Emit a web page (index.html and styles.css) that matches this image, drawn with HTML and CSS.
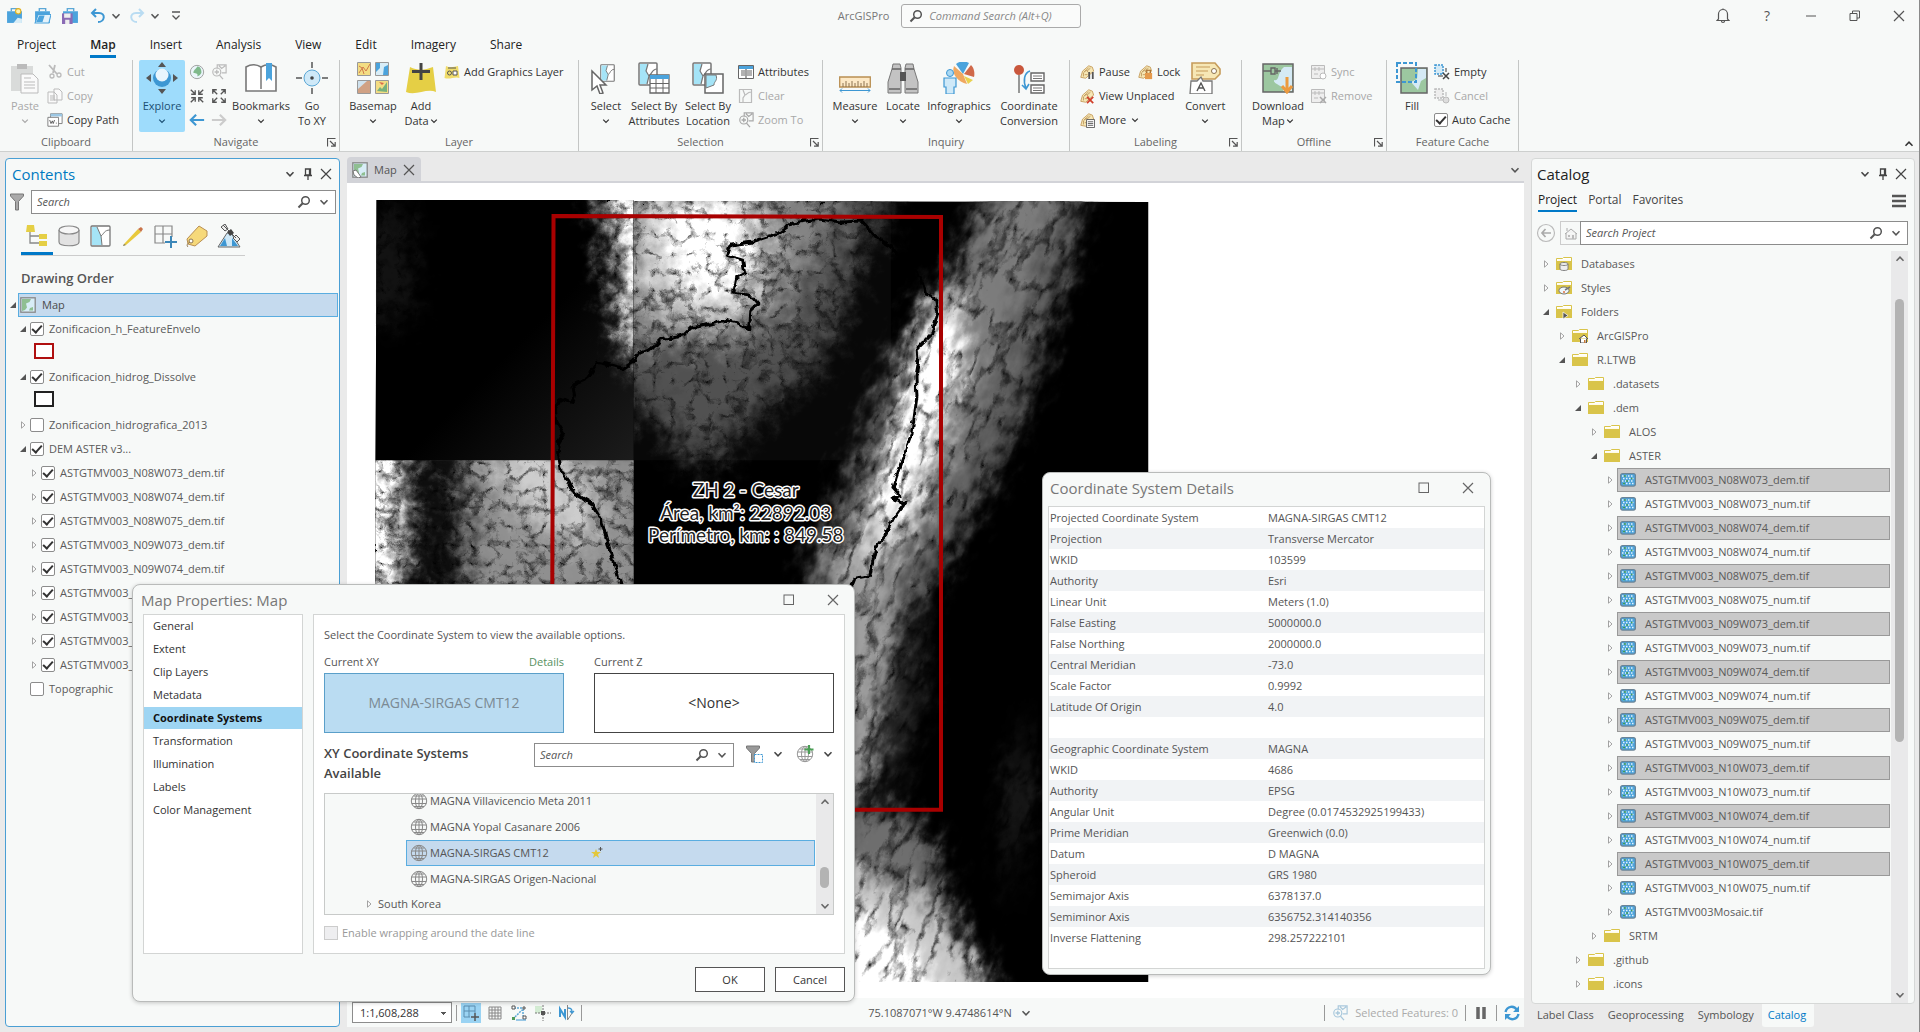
FILE: index.html
```html
<!DOCTYPE html>
<html lang="en">
<head>
<meta charset="utf-8">
<title>ArcGISPro</title>
<link rel="stylesheet" href="styles.css">
</head>
<body>
<svg class="sprite" aria-hidden="true">
  <symbol id="chev" viewBox="0 0 10 10"><path d="M1.5 3.2 5 6.8l3.500-3.600" fill="none" stroke="currentColor" stroke-width="1.500"/></symbol>
  <symbol id="chev-up" viewBox="0 0 10 10"><path d="M1.500 6.800 5 3.200l3.500 3.600" fill="none" stroke="currentColor" stroke-width="1.500"/></symbol>
  <symbol id="close" viewBox="0 0 12 12"><path d="M1 1l10 10M11 1 1 11" fill="none" stroke="currentColor" stroke-width="1.200"/></symbol>
  <symbol id="max" viewBox="0 0 12 12"><rect x="1" y="1" width="9.500" height="9.500" fill="none" stroke="currentColor"/></symbol>
  <symbol id="pin" viewBox="0 0 12 12"><path d="M3.500 1h5v6h-5zM7.500 1v6M2 7.500h8M6 7.500V12" fill="none" stroke="currentColor" stroke-width="1.300"/></symbol>
  <symbol id="mag" viewBox="0 0 14 14"><circle cx="8.500" cy="5.500" r="3.800" fill="none" stroke="#555" stroke-width="1.500"/><path d="M5.700 8.300 1.500 12.500" stroke="#555" stroke-width="2"/></symbol>
  <symbol id="open" viewBox="0 0 8 8"><path d="M7 1v6H1z" fill="#555"/></symbol>
  <symbol id="shut" viewBox="0 0 8 8"><path d="M2.500.8v6.400L6 4z" fill="#fff" stroke="#999" stroke-width=".9"/></symbol>
  <symbol id="launch" viewBox="0 0 9 9"><path d="M8.500.500h-8v8M3 3l5 5M8.200 4v4.200H4" fill="none" stroke="#555" stroke-width="1.200"/></symbol>
  <symbol id="folder" viewBox="0 0 16 14"><path d="M.500 1.500h6l1-1h8v12H.500z" fill="#fff" stroke="#d9c44a"/><path d="M0 4h16v9H0z" fill="#d9c44a"/><path d="M1.500 2.500h13V4h-13z" fill="#fffbe8"/></symbol>
  <symbol id="raster" viewBox="0 0 16 14"><rect x=".600" y=".600" width="14.800" height="12.500" rx="2" fill="#4ba3dc" stroke="#6b8496" stroke-width="1.200"/><path d="M2 3h12M3 5.500h11M2 8h12M3 10.500h11" stroke="#e3f3fc" stroke-width="1.300" stroke-dasharray="1.500 1.500"/><path d="M4 3h2M6 8h2M3 10.500h2M11 5.500h1.500" stroke="#3f9a55" stroke-width="1.500"/></symbol>
  <symbol id="globe" viewBox="0 0 18 18"><g fill="none" stroke="currentColor"><circle cx="9" cy="9" r="7.700"/><ellipse cx="9" cy="9" rx="3.500" ry="7.700"/><path d="M9 1.300v15.400M1.500 7h15M1.800 11.500h14.400M3.500 4h11M4 14.500h10"/></g></symbol>
  <symbol id="mapicon" viewBox="0 0 16 16"><rect x=".8" y=".8" width="14.400" height="14.400" fill="#d8edf7" stroke="#888" stroke-width="1.300"/><path d="M2 2h9L9.500 5 6 6.500l1 4L5 13l-3 1zM10 11l3-1v3.500H9z" fill="#8fbf92"/></symbol>
  <symbol id="case" viewBox="0 0 16 16"><path d="M5 4V1.500h6V4" fill="none" stroke="#5ca8d6" stroke-width="1.300"/><path d="M1 4h14v11H1z" fill="#4ba3dc"/></symbol>
  <symbol id="tag" viewBox="0 0 18 18"><path d="M2 15 4 8l7-6 4 1.500 1.500 4.500-9 8z" fill="#f6e7b5" stroke="#c69c5a"/><path d="M5 14V10l3-3 3 3v4M6 9l5-5M9 8l4-3.500M6.500 12h3" fill="none" stroke="#b98f52" stroke-width=".9"/></symbol>
  <symbol id="cards" viewBox="0 0 32 32"><rect x="1" y="1" width="18" height="22" rx="1" fill="#fff" stroke="#777" stroke-width="1.500"/><path d="M2 2h8l-2 7 3 5-2 8H2z" fill="#a5e4f7"/><path d="M10 2 8 9l3 5-2 8M19 7c-5 0-5 5-8 7" fill="none" stroke="#777" stroke-width="1.200"/></symbol>
  <symbol id="zoomsel" viewBox="0 0 18 18"><path d="M7 5V1h10v9h-5M9 2l3 3 4-3" fill="none" stroke="currentColor" stroke-width="1.300"/><circle cx="6.500" cy="9" r="4.500" fill="none" stroke="currentColor" stroke-width="1.300"/><path d="M4 9h5M6.500 6.500v5M9.500 12.500l4 4.500" stroke="currentColor" stroke-width="1.500"/></symbol>
  <symbol id="funnel" viewBox="0 0 14 18"><path d="M.500 1h13v2L8.500 8.500V17h-3V8.500L.500 3z" fill="#aaa" stroke="#777"/></symbol>
</svg>

<header class="top">
  <div class="titlebar">
    <nav class="quick" aria-label="Quick access">
      <button class="ic" aria-label="New"><svg width="17" height="17" viewBox="0 0 16 16"><use href="#case"/><path d="m7 15 4-5 4 1v4z" fill="#d8edf7"/><circle cx="11.500" cy="4" r="2.500" fill="#fff3b0" stroke="#e0b020"/></svg></button>
      <button class="ic" aria-label="Open"><svg width="17" height="17" viewBox="0 0 16 16"><use href="#case"/><path d="M4 7h12l-2 8H1z" fill="#e4f2fa" stroke="#4ba3dc"/><path d="M2 14 5 8h5l-2 6z" fill="#4ba3dc"/></svg></button>
      <button class="ic" aria-label="Save"><svg width="17" height="17" viewBox="0 0 16 16"><use href="#case"/><path d="M0 6h10v10H0z" fill="#8a6bb5"/><path d="M2 6h6v4H2zM3 12h4v4H3z" fill="#eee"/></svg></button>
      <button class="ic" aria-label="Undo"><svg width="16" height="16" viewBox="0 0 16 16"><path d="M6 1 2 5l4 4M2 5h7c7 0 6 9-1 9" fill="none" stroke="#3d97d3" stroke-width="2"/></svg></button>
      <svg class="c10" ><use href="#chev"/></svg>
      <button class="ic" aria-label="Redo"><svg width="16" height="16" viewBox="0 0 16 16"><path d="m10 1 4 4-4 4M14 5H7c-7 0-6 9 1 9" fill="none" stroke="#b9dcf2" stroke-width="2"/></svg></button>
      <svg class="c10"><use href="#chev"/></svg>
      <svg class="more-qa" viewBox="0 0 10 12"><path d="M1 2h8M1.500 5.500 5 9l3.500-3.500" fill="none" stroke="#555" stroke-width="1.300"/></svg>
    </nav>
    <div class="project"><span>ArcGISPro</span>
      <label class="cmd"><svg width="14" height="14"><use href="#mag"/></svg><input type="text" aria-label="Command search" placeholder="Command Search (Alt+Q)"></label>
    </div>
    <div class="winctl">
      <button aria-label="Notifications"><svg width="14" height="16" viewBox="0 0 14 16"><path d="M1 12.500h12L11.500 11V6a4.500 4.500 0 0 0-9 0v5zM5.500 13c0 2 3 2 3 0M7 .500v1.500" fill="none" stroke="#555" stroke-width="1.200"/></svg></button>
      <button class="help" aria-label="Help">?</button>
      <button aria-label="Minimize"><svg width="12" height="12" viewBox="0 0 12 12"><path d="M1 6h10" stroke="#555"/></svg></button>
      <button aria-label="Restore"><svg width="12" height="12" viewBox="0 0 12 12"><path d="M1 3.500h7v7H1zM3.500 3.500V1h7v7H8" fill="none" stroke="#555"/></svg></button>
      <button aria-label="Close"><svg width="12" height="12"><use href="#close"/></svg></button>
    </div>
  </div>
  <nav class="tabs" aria-label="Ribbon">
    <a href="#project">Project</a><a href="#map" class="on">Map</a><a href="#insert">Insert</a><a href="#analysis">Analysis</a><a href="#view">View</a><a href="#edit">Edit</a><a href="#imagery">Imagery</a><a href="#share">Share</a>
  </nav>
  <div class="ribbon">
    <section class="grp g1"><div class="tools">
      <button class="big w40 off"><svg viewBox="0 0 32 32"><path d="M2 4h22v25H2z" fill="#d9dbda"/><path d="M8 2h10v5H8z" fill="#bbb"/><path d="M12 12h12l5 5v14H12z" fill="#fafafa" stroke="#bbb"/><path d="M15 16h7M15 20h11M15 23h11M15 26h11" stroke="#bbb"/></svg><span>Paste</span><svg class="c10"><use href="#chev"/></svg></button>
      <div class="stack">
        <button class="sm off"><svg viewBox="0 0 16 16"><path d="m2 1 8 9M8 1 6 9" stroke="#bbb" stroke-width="1.800"/><circle cx="5" cy="12" r="2" fill="none" stroke="#bbb" stroke-width="1.300"/><circle cx="12" cy="11" r="2" fill="none" stroke="#bbb" stroke-width="1.300"/></svg>Cut</button>
        <button class="sm off"><svg viewBox="0 0 16 16"><path d="M7 1h5l3 3v8H7zM1 4h6l3 3v8H1zM3 8h5M3 10h5M3 12h5" fill="#fafafa" stroke="#bbb"/></svg>Copy</button>
        <button class="sm"><svg viewBox="0 0 18 16"><path d="M4 1h13v11H4z" fill="#fff" stroke="#777"/><path d="M4 1h13v3H4z" fill="#9bc7e4"/><path d="M1 5h12v10H1z" fill="#fff" stroke="#777"/><path d="m3 8 1.500 4L6 9l1 3 1.500-4M10.500 11v1" fill="none" stroke="#555"/></svg>Copy Path</button>
      </div></div><h3>Clipboard</h3></section>
    <section class="grp g2"><div class="tools">
      <button class="big w46 active"><svg viewBox="0 0 32 32"><circle cx="16" cy="16" r="9" fill="#3d97d3"/><circle cx="16" cy="13" r="6.500" fill="#e8f5fd"/><path d="m16 0 4 5h-8zM16 32l4-5h-8zM0 16l5-4v8zM32 16l-5-4v8z" fill="#555"/></svg><span>Explore</span><svg class="c10"><use href="#chev"/></svg></button>
      <div class="navgrid">
        <svg viewBox="0 0 18 18"><circle cx="9" cy="9" r="7.500" fill="#eaf5fa" stroke="#999"/><path d="M9 3c3-1 5 3 5 6s-4 5-5 5c2-3-1-4-4-4 0-4 3-4 4-7z" fill="#7fb98b"/></svg>
        <svg viewBox="0 0 18 18" class="dim"><use href="#zoomsel"/></svg>
        <svg viewBox="0 0 18 18"><path d="m2 2 4 4M7 2.500V7H2.500M16 2l-4 4M11 2.500V7h4.500M2 16l4-4M2.500 11H7v4.500M16 16l-4-4M15.500 11H11v4.500" fill="none" stroke="#555" stroke-width="1.500"/></svg>
        <svg viewBox="0 0 18 18"><path d="m7 7-5-5M2 6.500V2h4.500M11 7l5-5M11.500 2H16v4.500M7 11l-5 5M2 11.500V16h4.500M11 11l5 5M16 11.500V16h-4.500" fill="none" stroke="#555" stroke-width="1.500"/></svg>
        <svg viewBox="0 0 18 18"><path d="M17 9H2M8 3 2 9l6 6" fill="none" stroke="#3d97d3" stroke-width="2.400"/></svg>
        <svg viewBox="0 0 18 18"><path d="M1 9h15M10 3l6 6-6 6" fill="none" stroke="#ccc" stroke-width="2.400"/></svg>
      </div>
      <button class="big w64"><svg viewBox="0 0 32 32"><path d="M1 5c5-3 10-3 15 0 5-3 10-3 15 0v24H1z" fill="#fff" stroke="#777" stroke-width="1.600"/><path d="M16 5v22" stroke="#777" stroke-width="1.500"/><path d="M21 1h6v18l-3-3-3 3z" fill="#4ba3dc"/></svg><span>Bookmarks</span><svg class="c10"><use href="#chev"/></svg></button>
      <button class="big w40"><svg viewBox="0 0 32 32"><circle cx="16" cy="16" r="8" fill="#cfe9f8" stroke="#5ca8d6"/><circle cx="16" cy="16" r="1.800" fill="#444"/><path d="M16 0v6M16 26v6M0 16h6M26 16h6" stroke="#555" stroke-width="1.500"/></svg><span>Go<br>To XY</span></button>
    </div><h3>Navigate</h3><svg class="launch"><use href="#launch"/></svg></section>
    <section class="grp g3"><div class="tools">
      <button class="big w54"><svg viewBox="0 0 32 32"><path d="M.500.500h13v13H.500z" fill="#f3dd83" stroke="#999"/><path d="m2 11 4-6 3 4 4-7M2 4l3 2 2 6" fill="none" stroke="#d07a4a"/><path d="M18.500.500h13v13h-13z" fill="#d8edf7" stroke="#999"/><path d="M19 1h4v5l-4 4zM27 5l4-2v10h-5z" fill="#4ba3dc"/><path d="M.500 18.500h13v13H.500z" fill="#cfe2ee" stroke="#999"/><path d="M1 31v-4l9-8h3v12z" fill="#d0a184"/><path d="M18.500 18.500h13v13h-13z" fill="#f3dd83" stroke="#999"/><path d="m20 29 3-4 2 2 5-7v10z" fill="#78b27d"/><path d="m22 20 3 3 2-2z" fill="#d9694a"/></svg><span>Basemap</span><svg class="c10"><use href="#chev"/></svg></button>
      <button class="big w42"><svg viewBox="0 0 32 32"><path d="M5 5c8 4 15 3 23 0l3 25c-9-4-20 4-30 0z" fill="#e5cf45"/><path d="M16 1v17M7 9.500h18" stroke="#444" stroke-width="3"/></svg><span>Add<br>Data<svg class="c8"><use href="#chev"/></svg></span></button>
      <div class="stack flush">
        <button class="sm"><svg viewBox="0 0 16 16"><path d="M2 2c4 2 8 1 12 0l1.500 12C11 12 6 16 .500 14z" fill="#f0dc6a"/><circle cx="5.500" cy="9" r="2" fill="none" stroke="#555"/><path d="M9 7h4v4H9zM4 4h8" fill="#fff" stroke="#555"/></svg>Add Graphics Layer</button>
      </div></div><h3>Layer</h3></section>
    <section class="grp g4"><div class="tools">
      <button class="big w42"><svg viewBox="0 0 32 32"><svg x="10" y="0" width="24" height="28"><use href="#cards"/></svg><path d="M2 9v19l5-4 3 8 3-1-3-8h6z" fill="#fff" stroke="#666" stroke-width="1.500"/></svg><span>Select</span><svg class="c10"><use href="#chev"/></svg></button>
      <button class="big w54"><svg viewBox="0 0 32 32"><use href="#cards"/><path d="M12 13h19v18H12z" fill="#fff" stroke="#666" stroke-width="1.300"/><path d="M12 13h19v4H12z" fill="#4ba3dc"/><path d="M12 21.500h19M12 26h19M18 17v14M25 17v14" stroke="#666"/></svg><span>Select By<br>Attributes</span></button>
      <button class="big w54"><svg viewBox="0 0 32 32"><use href="#cards"/><path d="M13 12h18v19H13z" fill="#fff" stroke="#666" stroke-width="1.500"/><path d="M14 13h10c2 6-2 6-2 10l-8 3z" fill="#a5e4f7" stroke="#777"/></svg><span>Select By<br>Location</span></button>
      <div class="stack">
        <button class="sm"><svg viewBox="0 0 16 16"><path d="M.500 1.500h15v13H.500z" fill="#fff" stroke="#666"/><path d="M1 2h14v3H1z" fill="#4ba3dc"/><path d="M3 7h4M3 9h4M3 11h4M9 7h5M9 9h5M9 11h5M8 5v9" stroke="#666" stroke-width="1.200"/></svg>Attributes</button>
        <button class="sm off"><svg viewBox="0 0 16 16"><path d="M1.500 1.500h12v13h-12zM5 2l2 5-2 3v4M13 4C9 4 9 7 7 7" fill="none" stroke="#bbb" stroke-width="1.200"/></svg>Clear</button>
        <button class="sm off"><svg viewBox="0 0 18 18"><use href="#zoomsel"/></svg>Zoom To</button>
      </div></div><h3>Selection</h3><svg class="launch"><use href="#launch"/></svg></section>
    <section class="grp g5"><div class="tools">
      <button class="big w54"><svg viewBox="0 0 32 32"><path d="M.700 15h30.600v10H.700z" fill="#fde9c6" stroke="#b98f52" stroke-width="1.300"/><path d="M4 25v-4M7 25v-6M10 25v-4M13 25v-6M16 25v-4M19 25v-6M22 25v-4M25 25v-6M28 25v-4" stroke="#8c7350"/><path d="M1 28.500h30M3 26.500l-2 2 2 2M29 26.500l2 2-2 2" fill="none" stroke="#3d97d3"/></svg><span>Measure</span><svg class="c10"><use href="#chev"/></svg></button>
      <button class="big w42"><svg viewBox="0 0 32 32"><path d="M6 2h7l1 4v25H1V20L5 7zM19 2h7l1 5 4 13v11H18V6z" fill="#c3c3c3" stroke="#777"/><path d="M5 7h9M18 7h9M2 27h11M19 27h11" stroke="#666" stroke-width="1.500"/><path d="M13 10h6v9h-6z" fill="#555"/></svg><span>Locate</span><svg class="c10"><use href="#chev"/></svg></button>
      <button class="big w70"><svg viewBox="0 0 32 32"><path d="M20 12 13 2a12 12 0 0 1 13-1z" fill="#4ba3dc"/><path d="m21 12 7-9c3 3 4 8 3 12z" fill="#d0694a"/><path d="M20 12 11 4c-3 8 4 16 13 18z" fill="#f0a860"/><path d="m21 14 9 4-5 4z" fill="#e9d14e"/><circle cx="7" cy="11" r="3.500" fill="#a9d8f3" stroke="#3d97d3"/><path d="M1 16h12v9h-2v7H3v-7H1z" fill="#cfe9f8" stroke="#3d97d3" stroke-width="1.200"/></svg><span>Infographics</span><svg class="c10"><use href="#chev"/></svg></button>
      <button class="big w70"><svg viewBox="0 0 32 32"><circle cx="6" cy="8" r="5" fill="#c9573c"/><path d="M6 13v18" stroke="#777" stroke-width="1.500"/><path d="M17 9c-6 2-7 10-4 17M9 23l4 4 3-5" fill="none" stroke="#3d97d3" stroke-width="1.600"/><path d="M18 11h13v8H18zM18 23h13v8H18z" fill="#fff" stroke="#666" stroke-width="1.400"/><path d="M20 14h9M20 16.500h9M20 26h9M20 28.500h9" stroke="#777"/></svg><span>Coordinate<br>Conversion</span></button>
    </div><h3>Inquiry</h3></section>
    <section class="grp g6"><div class="tools">
      <div class="stack">
        <div class="pair"><button class="sm"><svg viewBox="0 0 18 18"><use href="#tag"/><path d="M11.500 9v8M15.500 9v8" stroke="#555" stroke-width="2"/></svg>Pause</button><button class="sm"><svg viewBox="0 0 18 18"><use href="#tag"/><path d="M9 10h8v7H9z" fill="#e59a4c"/><path d="M11 10V7h4v3" fill="none" stroke="#a0672a" stroke-width="1.300"/></svg>Lock</button></div>
        <button class="sm"><svg viewBox="0 0 18 18"><use href="#tag"/><path d="m9 10 7 7M16 10l-7 7" stroke="#d0402a" stroke-width="2"/></svg>View Unplaced</button>
        <button class="sm"><svg viewBox="0 0 18 18"><use href="#tag"/><path d="M8.500 8.500h9v9h-9z" fill="#fff" stroke="#555"/><path d="M10 11h6M10 13h6M10 15h6" stroke="#555"/></svg>More <svg class="c8"><use href="#chev"/></svg></button>
      </div>
      <button class="big w50"><svg viewBox="0 0 32 32"><path d="M3 1h23l5 6v5l-5 5H3z" fill="#f6e7b5" stroke="#c69c5a" stroke-width="1.600"/><path d="M7 5h14M7 9h12M7 13h8" stroke="#c69c5a" stroke-width="1.200"/><circle cx="25" cy="9" r="2.500" fill="#fff" stroke="#8c7350"/><path d="M2 19h6l4-4 2 4h9v13H1z" fill="#fff" stroke="#777" stroke-width="1.300"/><path d="m8 29 4-8 4 8M9.500 26h5" fill="none" stroke="#555" stroke-width="1.400"/></svg><span>Convert</span><svg class="c10"><use href="#chev"/></svg></button>
    </div><h3>Labeling</h3><svg class="launch"><use href="#launch"/></svg></section>
    <section class="grp g7"><div class="tools">
      <button class="big w60"><svg viewBox="0 0 32 32"><path d="M1 2h30v28H1z" fill="#9cc7a0" stroke="#666" stroke-width="1.500"/><path d="M22 5h8v24h-9c2-6-10-6-9-11 6 2 3-8 10-13z" fill="#d5eaf5"/><path d="M1 9h8M19 9H13M9 6h4v6H9zM15 6v6" fill="none" stroke="#666" stroke-width="1.400"/><path d="M25 15v14M20 24l5 6 5-6" fill="none" stroke="#eb9a3f" stroke-width="3"/></svg><span>Download<br>Map<svg class="c8"><use href="#chev"/></svg></span></button>
      <div class="stack">
        <button class="sm off"><svg viewBox="0 0 16 16"><path d="M.500 1.500h13v13H.500zM0 5h14M4 3v4M8 3v4M3 10h4" fill="#eee" stroke="#bbb"/><circle cx="12" cy="12" r="3" fill="#fff" stroke="#bbb"/></svg>Sync</button>
        <button class="sm off"><svg viewBox="0 0 16 16"><path d="M.500 1.500h13v13H.500zM0 5h14M4 3v4M8 3v4M3 10h4" fill="#eee" stroke="#bbb"/><path d="m9 9 6 6M15 9l-6 6" stroke="#aaa" stroke-width="1.500"/></svg>Remove</button>
      </div></div><h3>Offline</h3><svg class="launch"><use href="#launch"/></svg></section>
    <section class="grp g8"><div class="tools">
      <button class="big w40"><svg viewBox="0 0 32 32"><path d="M5 6h26v25H5z" fill="#9cc7a0" stroke="#666" stroke-width="1.500"/><path d="M22 7h8v9l-5 3-3 9-7-8 6-3z" fill="#d5eaf5"/><path d="M1 1h19v19H1z" fill="none" stroke="#3d97d3" stroke-width="2" stroke-dasharray="4 2"/></svg><span>Fill</span></button>
      <div class="stack">
        <button class="sm"><svg viewBox="0 0 16 16"><path d="M1 1h8v9H1z" fill="#d5eaf5" stroke="#3d97d3" stroke-width="1.500" stroke-dasharray="2 1"/><path d="M4 12h5M12 4v4" stroke="#777" stroke-width="1.500"/><path d="m9 9 6 6M15 9l-6 6" stroke="#444" stroke-width="1.500"/></svg>Empty</button>
        <button class="sm off"><svg viewBox="0 0 16 16"><path d="M1 1h8v9H1z" fill="#eee" stroke="#bbb" stroke-width="1.500" stroke-dasharray="2 1"/><path d="M4 12h5M12 4v4" stroke="#ccc" stroke-width="1.500"/><circle cx="12" cy="12" r="3" fill="#ddd" stroke="#bbb"/></svg>Cancel</button>
        <label class="sm"><input type="checkbox" class="cb" checked>Auto Cache</label>
      </div></div><h3>Feature Cache</h3></section>
    <button class="collapse" aria-label="Collapse ribbon"><svg class="c12"><use href="#chev-up"/></svg></button>
  </div>
</header>

<main class="work">
  <aside class="pane contents">
    <div class="phead"><h2>Contents</h2><svg class="c12"><use href="#chev"/></svg><svg class="i12"><use href="#pin"/></svg><svg class="i12"><use href="#close"/></svg></div>
    <div class="frow"><svg width="14" height="18"><use href="#funnel"/></svg><label class="search"><input type="text" aria-label="Search contents" placeholder="Search"><svg width="14" height="14"><use href="#mag"/></svg><svg class="c12"><use href="#chev"/></svg></label></div>
    <div class="listby">
      <button class="on" aria-label="List by drawing order"><svg viewBox="0 0 24 24"><path d="M5 9v11h9M5 13h9" fill="none" stroke="#888" stroke-width="1.300"/><path d="M2 2h7l1 7H1zM14 11h8v5h-8zM14 18h8v5h-8z" fill="#e5cf45"/></svg></button>
      <button aria-label="List by data source"><svg viewBox="0 0 24 24"><path d="M2 6v12c0 5 20 5 20 0V6" fill="#e2e2e2" stroke="#888" stroke-width="1.200"/><ellipse cx="12" cy="6" rx="10" ry="4" fill="#f6f6f6" stroke="#888" stroke-width="1.200"/></svg></button>
      <button aria-label="List by selection"><svg viewBox="0 0 24 24"><rect x="2" y="2" width="19" height="20" rx="1" fill="#fff" stroke="#777" stroke-width="1.300"/><path d="M3 3h5l4 9 1 9H3z" fill="#a5e4f7"/><path d="m8 3 4 9 1 9M21 6c-6 0-6 4-9 6" fill="none" stroke="#777"/></svg></button>
      <button aria-label="List by editing"><svg viewBox="0 0 24 24"><path d="M3 20 17 5l3 3L5 21l-3 1z" fill="#e8c93c"/><path d="m17 5 3-2 2 2-2 3z" fill="#c9744a"/><path d="m2 22 1-2 2 1z" fill="#777"/></svg></button>
      <button aria-label="List by snapping"><svg viewBox="0 0 24 24"><path d="M2 2h17v11M2 2v17h10M10 2v17M2 10h17" fill="none" stroke="#888" stroke-width="1.200"/><path d="M18 12v12M12 18h12" stroke="#3d87b8" stroke-width="2"/></svg></button>
      <button aria-label="List by labeling"><svg viewBox="0 0 24 24"><path d="M2 15 14 2l8 5v5L10 22l-7-2z" fill="#f6d97a" stroke="#b98f52"/><circle cx="6" cy="17" r="2" fill="#fff" stroke="#8c7350"/><path d="M5 18c-2 1-4 3-2 5" fill="none" stroke="#8c7350"/></svg></button>
      <button aria-label="List by perspective imagery"><svg viewBox="0 0 24 24"><path d="m1 23 9-14h4l9 14z" fill="#cfe9f8" stroke="#666"/><path d="m3 22 5-8 2 8zM15 14l6 8h-6z" fill="#3d97d3"/><path d="m6 1 13 13M4 3l4-3 3 5-3 2zM16 14l3-3 4 4-3 3z" fill="#eee" stroke="#555"/><path d="m10 8 4-3 3 4-4 3z" fill="#444"/></svg></button>
    </div>
    <h3 class="order">Drawing Order</h3>
    <ul class="toc">
      <li class="root"><svg class="tw"><use href="#open"/></svg><span class="sel"><svg width="16" height="16"><use href="#mapicon"/></svg>Map</span></li>
      <li class="l1"><svg class="tw"><use href="#open"/></svg><label><input class="cb" type="checkbox" checked>Zonificacion_h_FeatureEnvelo</label></li>
      <li class="sw"><i class="red"></i></li>
      <li class="l1"><svg class="tw"><use href="#open"/></svg><label><input class="cb" type="checkbox" checked>Zonificacion_hidrog_Dissolve</label></li>
      <li class="sw"><i></i></li>
      <li class="l1"><svg class="tw"><use href="#shut"/></svg><label><input class="cb" type="checkbox">Zonificacion_hidrografica_2013</label></li>
      <li class="l1"><svg class="tw"><use href="#open"/></svg><label><input class="cb" type="checkbox" checked>DEM ASTER v3...</label></li>
      <li class="l2"><svg class="tw"><use href="#shut"/></svg><label><input class="cb" type="checkbox" checked>ASTGTMV003_N08W073_dem.tif</label></li>
      <li class="l2"><svg class="tw"><use href="#shut"/></svg><label><input class="cb" type="checkbox" checked>ASTGTMV003_N08W074_dem.tif</label></li>
      <li class="l2"><svg class="tw"><use href="#shut"/></svg><label><input class="cb" type="checkbox" checked>ASTGTMV003_N08W075_dem.tif</label></li>
      <li class="l2"><svg class="tw"><use href="#shut"/></svg><label><input class="cb" type="checkbox" checked>ASTGTMV003_N09W073_dem.tif</label></li>
      <li class="l2"><svg class="tw"><use href="#shut"/></svg><label><input class="cb" type="checkbox" checked>ASTGTMV003_N09W074_dem.tif</label></li>
      <li class="l2"><svg class="tw"><use href="#shut"/></svg><label><input class="cb" type="checkbox" checked>ASTGTMV003_N09W075_dem.tif</label></li>
      <li class="l2"><svg class="tw"><use href="#shut"/></svg><label><input class="cb" type="checkbox" checked>ASTGTMV003_N10W073_dem.tif</label></li>
      <li class="l2"><svg class="tw"><use href="#shut"/></svg><label><input class="cb" type="checkbox" checked>ASTGTMV003_N10W074_dem.tif</label></li>
      <li class="l2"><svg class="tw"><use href="#shut"/></svg><label><input class="cb" type="checkbox" checked>ASTGTMV003_N10W075_dem.tif</label></li>
      <li class="l1"><span class="tw"></span><label><input class="cb" type="checkbox">Topographic</label></li>
    </ul>
  </aside>

  <section class="mapview">
    <div class="strip"><div class="mtab"><svg width="16" height="16" viewBox="0 0 16 16"><use href="#mapicon"/><path d="M1 9l3-1 3 4 2 3-3 1-4-3z" fill="#fff" stroke="#777"/></svg><span>Map</span><button aria-label="Close map"><svg class="i12"><use href="#close"/></svg></button></div><svg class="c12"><use href="#chev"/></svg></div>
    <div class="canvas">
      <svg class="dem" viewBox="347 183 1177 814" preserveAspectRatio="xMidYMin slice" role="img" aria-label="Elevation map">
        <defs>
          <filter id="relief" filterUnits="userSpaceOnUse" x="370" y="190" width="790" height="800" color-interpolation-filters="sRGB">
            <feGaussianBlur in="SourceGraphic" stdDeviation="15" result="soft"/>
            <feTurbulence type="fractalNoise" baseFrequency=".07" numOctaves="5" seed="4" result="warp"/>
            <feDisplacementMap in="soft" in2="warp" scale="45" xChannelSelector="R" yChannelSelector="G" result="bent"/>
            <feTurbulence type="turbulence" baseFrequency=".055" numOctaves="5" seed="11" result="t"/>
            <feDisplacementMap in="t" in2="warp" scale="10" xChannelSelector="G" yChannelSelector="R"/>
            <feColorMatrix values="1.300 1.300 0 0 .12  1.300 1.300 0 0 .12  1.300 1.300 0 0 .12  0 0 0 0 1" result="ridges"/>
            <feComposite in="bent" in2="ridges" operator="arithmetic" k1="1.150"/>
          </filter>
          <filter id="range" filterUnits="userSpaceOnUse" x="500" y="0" width="1000" height="1100" color-interpolation-filters="sRGB">
            <feGaussianBlur in="SourceGraphic" stdDeviation="11" result="soft"/>
            <feTurbulence type="fractalNoise" baseFrequency=".08 .05" numOctaves="5" seed="9" result="warp"/>
            <feDisplacementMap in="soft" in2="warp" scale="42" xChannelSelector="R" yChannelSelector="G" result="bent"/>
            <feTurbulence type="turbulence" baseFrequency=".06 .022" numOctaves="5" seed="23" result="t"/>
            <feDisplacementMap in="t" in2="warp" scale="12" xChannelSelector="G" yChannelSelector="R"/>
            <feColorMatrix values="1.400 1.300 0 0 .1  1.400 1.300 0 0 .1  1.400 1.300 0 0 .1  0 0 0 0 1" result="ridges"/>
            <feComposite in="bent" in2="ridges" operator="arithmetic" k1="1.150"/>
          </filter>
          <filter id="rough" x="-5%" y="-5%" width="110%" height="110%"><feTurbulence type="fractalNoise" baseFrequency=".14" numOctaves="2" seed="3"/><feDisplacementMap in="SourceGraphic" scale="6" xChannelSelector="R" yChannelSelector="G"/></filter>
          <clipPath id="nw"><path d="M377 200h257v260H376z"/></clipPath>
          <clipPath id="nc"><path d="M634 201h514v780H634z"/></clipPath>
          <clipPath id="sw"><path d="M376 460h258v521H376z"/></clipPath>
          <linearGradient id="fade" x1="0" y1="0" x2="1" y2="1"><stop offset=".55" stop-color="#000"/><stop offset="1" stop-color="#1c1c1c"/></linearGradient>
        </defs>
        <path d="M378 200l217 0v1l553 1v779H375l1-521 1-150z" fill="#000"/>
        <path d="M377 200h257v260H377z" fill="url(#fade)"/>
        <g clip-path="url(#nw)"><g filter="url(#relief)">
          <path d="M608 180h60v190l-36-10-12-90z" fill="#fff"/>
          <path d="M376 210h26v110h-26z" fill="#1a1a1a"/>
        </g></g>
        <g clip-path="url(#nc)">
        <g filter="url(#relief)">
          <path d="M600 180h290l-40 100-30 80-60 50-60 60-30-40-70-60z" fill="#424242"/>
          <path d="M600 180h250l-30 60-20 50-50 50-70 0-80 20z" fill="#707070"/>
          <path d="M640 190h110l20 60-20 60-50 20-60-30z" fill="#b5b5b5"/>
          <path d="M670 210h60l20 40-25 50-45-30z" fill="#fff"/>
        </g>
        <g transform="rotate(24 950 500)" filter="url(#range)"><g transform="rotate(-24 950 500)">
          <path d="M990 180h95l-10 60-25 80-20 70-35 80-45 80-60 100-30 130-50 40V560l50-110 30-90 60-80z" fill="#505050"/>
          <path d="M1010 180h55l-35 90-25 70-25 70-35 80-50 90-50 40-20-60 60-100 45-110 30-70z" fill="#6c6c6c"/>
          <path d="M930 290l30 0 5 70-25 70-20 80-30 50-25 40-35-10 45-80 30-110z" fill="#c0c0c0"/>
          <path d="M925 320l20 0 10 60-25 50-20 50-25 50-10-30 20-60z" fill="#fff"/>
          <path d="M835 560h50l10 60-10 60-10 90-45 60z" fill="#8a8a8a"/>
          <path d="M895 610l25 0 0 90-25 100-10-100z" fill="#222"/>
          <path d="M830 815l60-10 40 30 20 80 50 90H820z" fill="#606060"/>
          <path d="M830 850l50 30 50 20 40 50 20 60H830z" fill="#b0b0b0"/>
          <path d="M830 915l50 10 50 60v20H830z" fill="#fff"/>
          <path d="M1012 780l14-70-3 90-14 110z" fill="#303030"/>
        </g></g>
        <path d="M634 201h257v259H634z" fill="#fff" opacity=".03"/></g>
        <g clip-path="url(#sw)"><path d="M430 460h204v130H430z" fill="#444"/><g filter="url(#relief)">
          <path d="M350 430h55l-5 60 5 60-20 60h-40z" fill="#fff"/>
          <path d="M460 430h200v190H465z" fill="#7c7c7c"/>
          <path d="M480 440h70l50 60-10 50-60-30z" fill="#b4b4b4"/>
          <path d="M415 430h30l15 70-4 120h-45z" fill="#080808"/>
        </g></g>
        <path filter="url(#rough)" fill="none" stroke="#000" stroke-width="3" stroke-linejoin="round" d="M622 588 616 567 608 543 602 520 592 503 575 493 568 480 562 472 560 460 558 443 564 433 556 420 555 410 561 398 572 403 575 395 573 385 586 380 597 362 613 365 624 368 633 362 640 353 653 348 661 340 685 334 691 328 710 324 726 320 739 323 750 329 751 310 758 303 753 297 734 293 737 277 745 273 743 260 726 255 731 245 752 242 779 233 793 223 819 219 841 222 862 221 870 230 876 237 892 247 900 258 921 277 926 295 935 298 938 312 932 333 918 347 919 360 916 377 917 397 912 433 902 460 896 477 893 487 900 495 892 498 905 502 894 517 886 533 876 547 870 575 854 578 850 588"/>
        <path d="M554 216 941 217V809H552z" fill="none" stroke="#a80000" stroke-width="4"/>
        <g class="maplabel"><text x="746" y="497">ZH 2 - Cesar</text><text x="746" y="520">Área, km²: 22892.03</text><text x="746" y="542">Perímetro, km: : 849.58</text></g>
      </svg>
    </div>
    <div class="status">
      <div class="sl"><select aria-label="Scale"><option>1:1,608,288</option></select><i class="bar"></i>
        <button class="on" aria-label="Snapping"><svg viewBox="0 0 16 16"><path d="M1 1h11v7M1 1v11h6M6 1v11M1 6h11" fill="none" stroke="#5a8eb0"/><path d="M12 8v8M8 12h8" stroke="#555" stroke-width="1.500"/></svg></button>
        <button aria-label="Grid"><svg viewBox="0 0 16 16"><path d="M2 2h12v12H2zM5 2v12M8 2v12M11 2v12M2 5h12M2 8h12M2 11h12" fill="none" stroke="#888"/></svg></button>
        <button aria-label="Topology"><svg viewBox="0 0 16 16"><path d="M3 3h9M12 4v7M4 12l7-7" stroke="#5ca8d6" stroke-width="1.500" stroke-dasharray="2 1"/><path d="M1 1h3v3H1zM12 11h3v3h-3zM13 1v4M11 3h4" fill="#fff" stroke="#555"/><path d="M1 12h3v3H1z" fill="#4f9a5a"/><path d="M5 15h10" stroke="#3d97d3"/></svg></button>
        <button aria-label="Constraints"><svg viewBox="0 0 16 16"><path d="M0 1h7v7H0z" fill="#d3ecd3"/><path d="M0 8h16M8 0v16" stroke="#777" stroke-dasharray="2 1"/><path d="M6 6h4v4H6z" fill="#555"/></svg></button>
        <button aria-label="North"><svg viewBox="0 0 16 16"><path d="M1 12V4l5 8V4" fill="none" stroke="#3d97d3" stroke-width="2"/><path d="M8.500 0v15l6-9" fill="none" stroke="#888"/><path d="M9 3c4 0 4 2 4 5M11 6l2 2 2-2" fill="none" stroke="#3d97d3" stroke-width="1.300"/></svg></button><i class="bar"></i></div>
      <div class="sc">75.1087071°W 9.4748614°N <svg class="c12"><use href="#chev"/></svg></div>
      <div class="sr"><i class="bar"></i><svg class="selzoom" viewBox="0 0 18 18"><use href="#zoomsel"/></svg><span>Selected Features: 0</span><i class="bar"></i><button aria-label="Pause drawing"><svg viewBox="0 0 16 16"><path d="M5 2v12M11 2v12" stroke="#666" stroke-width="3.500"/></svg></button><i class="bar"></i><button aria-label="Refresh"><svg viewBox="0 0 16 16"><path d="M1.500 7C3 1 10 0 13 5M14.500 9C13 15 6 16 3 11" fill="none" stroke="#3d97d3" stroke-width="2.400"/><path d="M15 1v6H9zM1 15V9h6z" fill="#3d97d3"/></svg></button></div>
    </div>
  </section>

  <aside class="right">
    <div class="pane catalog">
      <div class="phead dark"><h2>Catalog</h2><svg class="c12"><use href="#chev"/></svg><svg class="i12"><use href="#pin"/></svg><svg class="i12"><use href="#close"/></svg></div>
      <nav class="ctabs"><a href="#p" class="on">Project</a><a href="#portal">Portal</a><a href="#fav">Favorites</a><button aria-label="Menu"><svg width="16" height="14" viewBox="0 0 16 14"><path d="M1 2h14M1 7h14M1 12h14" stroke="#555" stroke-width="2.400"/></svg></button></nav>
      <div class="crow"><button aria-label="Back"><svg width="20" height="20" viewBox="0 0 20 20"><circle cx="10" cy="10" r="8.500" fill="none" stroke="#bbb" stroke-width="1.200"/><path d="M15 10H6M9.500 6 6 10l3.500 4" fill="none" stroke="#aaa" stroke-width="1.700"/></svg></button><button class="home" aria-label="Home"><svg width="14" height="14" viewBox="0 0 14 14"><path d="M2 7v6h10V7M1 8l6-5 6 5M3 5V2" fill="#f3f3f3" stroke="#aaa"/><path d="M8 9h2v4H8zM4 9h2v2H4z" fill="#bbb"/></svg></button><label class="search"><input type="text" aria-label="Search project" placeholder="Search Project"><svg width="14" height="14"><use href="#mag"/></svg><svg class="c12"><use href="#chev"/></svg></label></div>
      <div class="cbody">
        <ul class="tree">
          <li class="d0"><svg class="tw"><use href="#shut"/></svg><span><svg class="f" viewBox="0 0 16 14"><use href="#folder"/><path d="M4 7v5c0 2 8 2 8 0V7c0-2-8-2-8 0s8 2 8 0" fill="#eee" stroke="#777" stroke-width=".9"/></svg>Databases</span></li>
          <li class="d0"><svg class="tw"><use href="#shut"/></svg><span><svg class="f" viewBox="0 0 16 14"><use href="#folder"/><ellipse cx="8" cy="9.500" rx="5" ry="3.500" fill="#eef6fa" stroke="#777"/><path d="m9 9 5-3" stroke="#777" stroke-width="1.500"/><circle cx="8" cy="11" r="1" fill="#e07040"/></svg>Styles</span></li>
          <li class="d0"><svg class="tw"><use href="#open"/></svg><span><svg class="f" viewBox="0 0 16 14"><use href="#folder"/><path d="M7 7l5 3.500L7 14z" fill="#555" stroke="#fff" stroke-width=".7"/></svg>Folders</span></li>
          <li class="d1"><svg class="tw"><use href="#shut"/></svg><span><svg class="f" viewBox="0 0 16 14"><use href="#folder"/><path d="m7 10 5-4 4 4M8.500 9.500V14h6V9.500" fill="#fff" stroke="#555"/><path d="M12 11h1.500v3H12z" fill="#c77a3a"/></svg>ArcGISPro</span></li>
          <li class="d1"><svg class="tw"><use href="#open"/></svg><span><svg class="f"><use href="#folder"/></svg>R.LTWB</span></li>
          <li class="d2"><svg class="tw"><use href="#shut"/></svg><span><svg class="f"><use href="#folder"/></svg>.datasets</span></li>
          <li class="d2"><svg class="tw"><use href="#open"/></svg><span><svg class="f"><use href="#folder"/></svg>.dem</span></li>
          <li class="d3"><svg class="tw"><use href="#shut"/></svg><span><svg class="f"><use href="#folder"/></svg>ALOS</span></li>
          <li class="d3"><svg class="tw"><use href="#open"/></svg><span><svg class="f"><use href="#folder"/></svg>ASTER</span></li>
          <li class="d4 hit"><svg class="tw"><use href="#shut"/></svg><span><svg class="f"><use href="#raster"/></svg>ASTGTMV003_N08W073_dem.tif</span></li>
          <li class="d4"><svg class="tw"><use href="#shut"/></svg><span><svg class="f"><use href="#raster"/></svg>ASTGTMV003_N08W073_num.tif</span></li>
          <li class="d4 hit"><svg class="tw"><use href="#shut"/></svg><span><svg class="f"><use href="#raster"/></svg>ASTGTMV003_N08W074_dem.tif</span></li>
          <li class="d4"><svg class="tw"><use href="#shut"/></svg><span><svg class="f"><use href="#raster"/></svg>ASTGTMV003_N08W074_num.tif</span></li>
          <li class="d4 hit"><svg class="tw"><use href="#shut"/></svg><span><svg class="f"><use href="#raster"/></svg>ASTGTMV003_N08W075_dem.tif</span></li>
          <li class="d4"><svg class="tw"><use href="#shut"/></svg><span><svg class="f"><use href="#raster"/></svg>ASTGTMV003_N08W075_num.tif</span></li>
          <li class="d4 hit"><svg class="tw"><use href="#shut"/></svg><span><svg class="f"><use href="#raster"/></svg>ASTGTMV003_N09W073_dem.tif</span></li>
          <li class="d4"><svg class="tw"><use href="#shut"/></svg><span><svg class="f"><use href="#raster"/></svg>ASTGTMV003_N09W073_num.tif</span></li>
          <li class="d4 hit"><svg class="tw"><use href="#shut"/></svg><span><svg class="f"><use href="#raster"/></svg>ASTGTMV003_N09W074_dem.tif</span></li>
          <li class="d4"><svg class="tw"><use href="#shut"/></svg><span><svg class="f"><use href="#raster"/></svg>ASTGTMV003_N09W074_num.tif</span></li>
          <li class="d4 hit"><svg class="tw"><use href="#shut"/></svg><span><svg class="f"><use href="#raster"/></svg>ASTGTMV003_N09W075_dem.tif</span></li>
          <li class="d4"><svg class="tw"><use href="#shut"/></svg><span><svg class="f"><use href="#raster"/></svg>ASTGTMV003_N09W075_num.tif</span></li>
          <li class="d4 hit"><svg class="tw"><use href="#shut"/></svg><span><svg class="f"><use href="#raster"/></svg>ASTGTMV003_N10W073_dem.tif</span></li>
          <li class="d4"><svg class="tw"><use href="#shut"/></svg><span><svg class="f"><use href="#raster"/></svg>ASTGTMV003_N10W073_num.tif</span></li>
          <li class="d4 hit"><svg class="tw"><use href="#shut"/></svg><span><svg class="f"><use href="#raster"/></svg>ASTGTMV003_N10W074_dem.tif</span></li>
          <li class="d4"><svg class="tw"><use href="#shut"/></svg><span><svg class="f"><use href="#raster"/></svg>ASTGTMV003_N10W074_num.tif</span></li>
          <li class="d4 hit"><svg class="tw"><use href="#shut"/></svg><span><svg class="f"><use href="#raster"/></svg>ASTGTMV003_N10W075_dem.tif</span></li>
          <li class="d4"><svg class="tw"><use href="#shut"/></svg><span><svg class="f"><use href="#raster"/></svg>ASTGTMV003_N10W075_num.tif</span></li>
          <li class="d4"><svg class="tw"><use href="#shut"/></svg><span><svg class="f"><use href="#raster"/></svg>ASTGTMV003Mosaic.tif</span></li>
          <li class="d3"><svg class="tw"><use href="#shut"/></svg><span><svg class="f"><use href="#folder"/></svg>SRTM</span></li>
          <li class="d2"><svg class="tw"><use href="#shut"/></svg><span><svg class="f"><use href="#folder"/></svg>.github</span></li>
          <li class="d2"><svg class="tw"><use href="#shut"/></svg><span><svg class="f"><use href="#folder"/></svg>.icons</span></li>
        </ul>
        <div class="scroll"><svg class="c10"><use href="#chev-up"/></svg><div class="track tall"><i></i></div><svg class="c10"><use href="#chev"/></svg></div>
      </div>
    </div>
    <nav class="btabs"><a href="#lc">Label Class</a><a href="#gp">Geoprocessing</a><a href="#sy">Symbology</a><a href="#cat" class="on">Catalog</a></nav>
  </aside>
</main>

<div class="dialog details" role="dialog" aria-label="Coordinate System Details">
  <div class="dhead"><h2>Coordinate System Details</h2><button aria-label="Maximize details"><svg class="i12"><use href="#max"/></svg></button><button aria-label="Close details"><svg class="i12"><use href="#close"/></svg></button></div>
  <div class="tbox"><table>
    <tr><td>Projected Coordinate System</td><td>MAGNA-SIRGAS CMT12</td></tr>
    <tr><td>Projection</td><td>Transverse Mercator</td></tr>
    <tr><td>WKID</td><td>103599</td></tr>
    <tr><td>Authority</td><td>Esri</td></tr>
    <tr><td>Linear Unit</td><td>Meters (1.0)</td></tr>
    <tr><td>False Easting</td><td>5000000.0</td></tr>
    <tr><td>False Northing</td><td>2000000.0</td></tr>
    <tr><td>Central Meridian</td><td>-73.0</td></tr>
    <tr><td>Scale Factor</td><td>0.9992</td></tr>
    <tr><td>Latitude Of Origin</td><td>4.0</td></tr>
    <tr><td></td><td></td></tr>
    <tr><td>Geographic Coordinate System</td><td>MAGNA</td></tr>
    <tr><td>WKID</td><td>4686</td></tr>
    <tr><td>Authority</td><td>EPSG</td></tr>
    <tr><td>Angular Unit</td><td>Degree (0.0174532925199433)</td></tr>
    <tr><td>Prime Meridian</td><td>Greenwich (0.0)</td></tr>
    <tr><td>Datum</td><td>D MAGNA</td></tr>
    <tr><td>Spheroid</td><td>GRS 1980</td></tr>
    <tr><td>Semimajor Axis</td><td>6378137.0</td></tr>
    <tr><td>Semiminor Axis</td><td>6356752.314140356</td></tr>
    <tr><td>Inverse Flattening</td><td>298.257222101</td></tr>
  </table></div>
</div>

<div class="dialog props" role="dialog" aria-label="Map Properties">
  <div class="dhead"><h2>Map Properties: Map</h2><button aria-label="Maximize properties"><svg class="i12"><use href="#max"/></svg></button><button aria-label="Close properties"><svg class="i12"><use href="#close"/></svg></button></div>
  <div class="pbody">
    <nav class="plist"><a href="#1">General</a><a href="#2">Extent</a><a href="#3">Clip Layers</a><a href="#4">Metadata</a><a href="#5" class="on">Coordinate Systems</a><a href="#6">Transformation</a><a href="#7">Illumination</a><a href="#8">Labels</a><a href="#9">Color Management</a></nav>
    <div class="ppanel">
      <p>Select the Coordinate System to view the available options.</p>
      <div class="cur">
        <div><div class="cap"><span>Current XY</span><a href="#details">Details</a></div><button class="xy">MAGNA-SIRGAS CMT12</button></div>
        <div><div class="cap"><span>Current Z</span></div><button class="z">&lt;None&gt;</button></div>
      </div>
      <div class="avail"><h3>XY Coordinate Systems Available</h3>
        <label class="search"><input type="text" aria-label="Search coordinate systems" placeholder="Search"><svg width="14" height="14"><use href="#mag"/></svg><svg class="c12"><use href="#chev"/></svg></label>
        <button aria-label="Filter"><svg width="18" height="18" viewBox="0 0 18 18"><path d="M.500 1h13v2L8.500 8.500V17h-3V8.500L.500 3z" fill="#999" stroke="#777"/><path d="M8.500 9.500h8v8h-8z" fill="#fff" stroke="#3d97d3" stroke-dasharray="2 1"/></svg><svg class="c12"><use href="#chev"/></svg></button>
        <button aria-label="Add coordinate system"><svg class="gadd" width="18" height="18" viewBox="0 0 18 18"><use href="#globe"/><path d="M13 0v9M8.500 4.500h9" stroke="#4a9f55" stroke-width="2.200"/></svg><svg class="c12"><use href="#chev"/></svg></button>
      </div>
      <div class="cslist">
        <ul><li><svg class="g"><use href="#globe"/></svg>MAGNA Villavicencio Meta 2011</li>
        <li><svg class="g"><use href="#globe"/></svg>MAGNA Yopal Casanare 2006</li>
        <li class="on"><svg class="g"><use href="#globe"/></svg>MAGNA-SIRGAS CMT12<svg class="star" viewBox="0 0 12 12"><path d="m5 2 1.300 3H10L7 7.200 8 11 5 8.800 2 11l1-3.800L0 5h3.700z" fill="#e3c73c"/><path d="M9.500 0v4M7.500 2h4" stroke="#555"/></svg></li>
        <li><svg class="g"><use href="#globe"/></svg>MAGNA-SIRGAS Origen-Nacional</li>
        <li class="country"><svg class="tw"><use href="#shut"/></svg>South Korea</li></ul>
        <div class="scroll"><svg class="c10"><use href="#chev-up"/></svg><div class="track short"><i></i></div><svg class="c10"><use href="#chev"/></svg></div>
      </div>
      <label class="wrap"><input type="checkbox" class="cb" disabled>Enable wrapping around the date line</label>
    </div>
  </div>
  <div class="foot"><button>OK</button><button>Cancel</button></div>
</div>
</body>
</html>
```

FILE: styles.css
```css
* { box-sizing: border-box; }
body {
  margin: 0;
  height: 100vh;
  display: grid;
  grid-template-rows: auto minmax(0, 1fr);
  overflow: hidden;
  position: relative;
  background: #eaeaea;
  border-right: 1px solid #8a8a8a;
  color: #4c4c4c;
  font: 11px/16px "Open Sans", "Noto Sans", sans-serif;
}
.sprite { position: absolute; width: 0; height: 0; }
button { font: inherit; color: inherit; background: none; border: 0; padding: 0; margin: 0; }
a { color: inherit; text-decoration: none; }
h2, h3, p, ul { margin: 0; padding: 0; font-weight: 400; font-size: 11px; }
ul { list-style: none; }
svg { display: block; flex: none; }
input[type="text"] { font: inherit; border: 0; outline: 0; background: none; padding: 0; min-width: 0; flex: 1; width: 100%; }
input::placeholder { color: #555; font-style: italic; opacity: 1; }
.c8 { width: 8px; height: 8px; }
.c10, .c12 { width: 10px; height: 10px; }
.c12 { margin: 0 1px; }
.i12 { width: 12px; height: 12px; }

/* checkboxes */
.cb {
  appearance: none;
  width: 14px;
  height: 14px;
  margin: 0;
  flex: none;
  border: 1px solid #8c8c8c;
  border-radius: 2px;
  background: #fff;
  display: grid;
  place-items: center;
}
.cb:checked::after {
  content: "";
  width: 4px;
  height: 8px;
  border: solid #333;
  border-width: 0 2px 2px 0;
  transform: translateY(-1px) rotate(42deg);
}
.cb:disabled { background: #eeeef0; border-color: #ccc; border-radius: 0; }

/* title bar and ribbon */
.top { background: #f7f9f8; border-bottom: 1px solid #cdcfce; }
.titlebar { display: grid; grid-template-columns: 1fr auto 1fr; align-items: center; height: 31px; }
.quick { display: flex; align-items: center; gap: 11px; padding-left: 6px; color: #555; }
.quick .c10 { margin: 0 -3px 0 -6px; }
.more-qa { width: 10px; height: 12px; margin-left: 3px; }
.project { display: flex; align-items: center; gap: 12px; color: #777; }
.cmd { display: flex; align-items: center; gap: 6px; width: 180px; height: 24px; padding: 0 7px; border: 1px solid #aaa; border-radius: 3px; background: #fafbfa; }
.cmd input::placeholder { color: #888; }
.winctl { display: flex; justify-content: flex-end; gap: 14px; padding-right: 5px; color: #555; }
.winctl button { width: 30px; height: 24px; display: grid; place-items: center; }
.winctl .help { font-size: 14px; }
.tabs { display: flex; gap: 34px; padding: 4px 17px 0; font-size: 12px; line-height: 20px; color: #222; }
.tabs a { padding: 0; border-bottom: 3px solid transparent; }
.tabs .on { font-weight: 600; border-color: #0079c8; }
.ribbon { display: flex; padding-top: 2px; position: relative; }
.grp { position: relative; height: 91px; display: flex; flex-direction: column; border-right: 1px solid #c4c6c5; }
.grp h3 { text-align: center; color: #666; line-height: 16px; padding-bottom: 1px; }
.tools { display: flex; flex: 1; padding: 0 0 0 6px; }
.g1 { width: 133px; } .g2 { width: 207px; } .g3 { width: 239px; } .g4 { width: 244px; }
.g5 { width: 247px; } .g6 { width: 172px; } .g7 { width: 145px; } .g8 { width: 132px; }
.g5 .tools { padding-left: 5px; }
.big { display: flex; flex-direction: column; align-items: center; height: 72px; padding-top: 2px; color: #333; line-height: 15px; text-align: center; border-radius: 2px; flex: none; }
.big > svg:first-child { width: 32px; height: 32px; margin-bottom: 4px; }
.big .c10 { margin-top: 4px; width: 8px; height: 8px; }
.big span { white-space: nowrap; }
.big span .c8, .sm .c8 { display: inline-block; margin-left: 1px; width: 8px; height: 8px; }
.off, .big.off { color: #a8a8a8; }
.active { background: #9edcfc; color: #1c4f73; }
.w40 { width: 38px; } .w42 { width: 42px; } .w46 { width: 46px; } .w50 { width: 50px; } .w54 { width: 54px; } .w60 { width: 60px; } .w64 { width: 64px; } .w70 { width: 70px; }
.stack { display: flex; flex-direction: column; padding-left: 3px; }
.stack.flush { padding-left: 2px; }
.sm { display: flex; align-items: center; gap: 4px; height: 24px; color: #333; white-space: nowrap; }
.sm.off { color: #a8a8a8; }
.sm > svg:first-child { width: 16px; height: 16px; }
.pair { display: flex; gap: 7px; }
.navgrid { display: grid; grid-template-columns: 16px 16px; grid-auto-rows: 24px; gap: 0 6px; align-items: center; padding: 0 2px 0 4px; }
.navgrid svg { width: 16px; height: 16px; }
.dim { color: #bbb; }
.launch { position: absolute; right: 3px; bottom: 4px; width: 9px; height: 9px; }
.collapse { position: absolute; right: 4px; bottom: 2px; color: #333; }

/* workspace */
.work { display: grid; grid-template-columns: 335px minmax(0, 1fr) 384px; gap: 7px; padding: 6px 4px 5px 5px; }
.pane { background: #f7f9f8; border: 1px solid #d6d8d7; border-radius: 4px; }
.contents { border: 1px solid #4a9fd4; padding: 0 2px 0 4px; min-height: 0; overflow: hidden; }
.phead { display: flex; align-items: center; gap: 6px; height: 31px; padding: 0 5px 2px 2px; color: #444; }
.phead h2 { flex: 1; font-size: 15px; line-height: 20px; color: #0079c1; }
.dark h2 { color: #222; }
.frow { display: flex; align-items: center; gap: 7px; padding: 0 1px 0 0; }
.search { display: flex; align-items: center; gap: 7px; flex: 1; height: 24px; border: 1px solid #8c8c8c; background: #fff; padding: 0 5px; color: #555; }
.listby { display: flex; width: 224px; margin: 3px 0 0 11px; border-bottom: 1px solid #ccc; }
.listby button { width: 32px; height: 38px; display: grid; place-items: center; }
.listby svg { width: 24px; height: 24px; }
.listby .on { border-bottom: 3px solid #0079c8; }
.order { padding: 13px 0 6px 11px; font-size: 13px; line-height: 18px; font-weight: 600; color: #555; }
.toc li { display: flex; align-items: center; height: 24px; }
.tw { width: 8px; height: 8px; flex: none; }
.sel { display: flex; align-items: center; gap: 6px; flex: 1; height: 24px; margin-left: 1px; padding-left: 1px; border: 1px solid #5aade0; background: #c5daee; }
.toc .root { margin-right: -1px; }
.toc .root .tw { margin-left: -1px; }
.toc label { display: flex; align-items: center; gap: 5px; padding-left: 3px; color: #5a5a5a; }
.l1 { padding-left: 9px; }
.l2 { padding-left: 20px; }
.sw i { width: 20px; height: 16px; margin: -4px 0 0 24px; border: 2px solid #222; background: #fff; }
.sw .red { border-color: #b01010; }

.mapview { display: grid; grid-template-rows: 25px minmax(0, 1fr) 29px; min-width: 0; background: #f7f9f8; }
.strip { display: flex; justify-content: space-between; align-items: center; background: #eaeaea; border-bottom: 2px solid #d2d3d8; padding-right: 3px; color: #555; }
.mtab { display: flex; align-items: center; gap: 6px; height: 25px; padding: 0 6px 0 5px; background: #d2d3d8; border-radius: 4px 4px 0 0; font-size: 11px; }
.canvas { min-height: 0; background: #fff; overflow: hidden; }
.dem { width: 100%; height: 100%; }
.maplabel { font: 19px Lato, "Open Sans", sans-serif; text-anchor: middle; fill: #222; stroke: #fff; stroke-width: 3px; stroke-linejoin: round; paint-order: stroke; }
.status { display: grid; grid-template-columns: 1fr auto 1fr; align-items: center; color: #666; padding: 0 4px 0 5px; }
.sl, .sr, .sc { display: flex; align-items: center; gap: 4px; }
.sr { justify-content: flex-end; gap: 7px; color: #aaa; }
.sc { gap: 8px; padding-left: 28px; color: #555; }
.sl button { width: 20px; }
.status button { height: 20px; display: grid; place-items: center; }
.status button svg { width: 16px; height: 16px; }
.status .on { background: #9ad3f3; }
.bar { width: 1px; height: 16px; background: #999; }
.selzoom { width: 16px; height: 16px; color: #a9c8dc; }
.status select { appearance: none; width: 100px; height: 21px; border: 1px solid #8c8c8c; border-radius: 0; font: inherit; color: #333; padding: 0 7px; background: linear-gradient(#555, #555) 88px 9px / 5px 1px no-repeat, linear-gradient(#555, #555) 89px 10px / 3px 1px no-repeat, linear-gradient(#555, #555) 90px 11px / 1px 1px no-repeat, #fff; }

.right { display: grid; grid-template-rows: minmax(0, 1fr) 23px; min-height: 0; }
.catalog { display: flex; flex-direction: column; min-height: 0; padding: 0 6px 0 4px; overflow: hidden; }
.catalog .phead { padding: 0 1px 2px; }
.ctabs { display: flex; gap: 11px; padding-left: 2px; font-size: 12px; line-height: 20px; color: #444; }
.ctabs .on { border-bottom: 2px solid #0079c8; color: #222; }
.ctabs button { margin-left: auto; padding-right: 1px; }
.crow { display: flex; align-items: center; margin-top: 9px; }
.home { width: 20px; height: 24px; margin-left: 4px; border: 1px solid #ccc; border-right: 0; display: grid; place-items: center; }
.cbody { display: flex; flex: 1; min-height: 0; margin-top: 6px; }
.tree { flex: 1; padding: 1px 1px 0 6px; overflow: hidden; color: #5a5a5a; }
.tree li { display: flex; align-items: center; gap: 3px; height: 24px; }
.tree span { display: flex; align-items: center; gap: 9px; flex: 1; height: 24px; padding-left: 2px; border: 1px solid transparent; }
.f { width: 16px; height: 14px; }
.d1 { padding-left: 16px; } .d2 { padding-left: 32px; } .d3 { padding-left: 48px; } .d4 { padding-left: 64px; }
.tree .hit span { background: #c9c9c9; border-color: #999; }
.scroll { width: 17px; background: #e9e9ea; display: flex; flex-direction: column; align-items: center; padding: 3px 0; color: #666; }
.track { flex: 1; width: 9px; display: flex; flex-direction: column; }
.track i { border-radius: 5px; background: #b3b3b3; }
.tall i { height: 61%; margin-top: 35px; }
.short i { height: 21px; margin-top: 60px; }
.btabs { display: flex; font-size: 11px; line-height: 22px; color: #555; }
.btabs a { padding: 0 8px 0 6px; }
.btabs .on { background: #f7f9f8; color: #0079c8; border-radius: 0 0 3px 3px; }

/* floating windows */
.dialog { position: absolute; background: #f7f9f8; border: 1px solid #b9bbba; border-radius: 8px; box-shadow: 0 1px 4px #0003; }
.dhead { display: flex; align-items: center; gap: 32px; height: 33px; color: #666; }
.dhead h2 { flex: 1; font-size: 15px; line-height: 20px; color: #777; }
.details { left: 1042px; top: 472px; width: 449px; padding: 0 5px 5px; }
.details .dhead { padding: 0 11px 4px 2px; }
.tbox { height: 463px; background: #fff; border: 1px solid #d3d5d4; }
table { width: 100%; border-collapse: collapse; table-layout: fixed; }
td { height: 21px; padding: 0 1px; line-height: 20px; color: #555; }
td:first-child { width: 218px; }
tr:nth-child(even) td { background: #f1f3f5; }
.props { left: 132px; top: 584px; width: 723px; height: 418px; padding: 0 9px 10px 10px; }
.props .dhead { height: 29px; padding: 0 6px 0 0; margin-left: -2px; }
.pbody { display: grid; grid-template-columns: 160px 1fr; gap: 10px; height: 340px; }
.plist { background: #fff; border: 1px solid #d3d5d4; color: #333; line-height: 22px; display: flex; flex-direction: column; gap: 1px; }
.plist a { padding-left: 9px; }
.plist .on { background: #9ed5f3; font-weight: 700; color: #111; }
.ppanel { background: #fff; border: 1px solid #d3d5d4; padding: 12px 10px 0; color: #555; min-width: 0; }
.cur { display: grid; grid-template-columns: 1fr 1fr; gap: 30px; margin-top: 10px; }
.cap { display: flex; justify-content: space-between; line-height: 18px; padding-bottom: 2px; }
.cap a { color: #57915f; }
.xy, .z { width: 100%; height: 60px; border: 1px solid #5a9fc9; background: #badcf2; color: #7b8a94; font-size: 14px; }
.z { border-color: #444; background: #fff; color: #333; }
.avail { display: flex; gap: 12px; margin-top: 10px; color: #444; align-items: flex-start; }
.avail h3 { width: 198px; padding-right: 30px; font-size: 13px; line-height: 20px; font-weight: 600; }
.avail .search { flex: none; width: 200px; }
.avail button { display: flex; align-items: center; gap: 8px; height: 22px; }
.gadd { color: #999; }
.cslist { display: flex; height: 122px; margin-top: 10px; border: 1px solid #c8cac9; background: #f7f9f8; overflow: hidden; }
.cslist ul { flex: 1; margin-top: -6px; padding-right: 1px; }
.cslist li { display: flex; align-items: center; gap: 2px; height: 26px; margin-left: 81px; padding-left: 3px; border: 1px solid transparent; }
.cslist .on { background: #c5daee; border-color: #5aade0; }
.cslist .country { margin-left: 36px; gap: 5px; height: 24px; }
.g { width: 18px; height: 18px; color: #888; }
.star { width: 12px; height: 12px; margin-left: 40px; }
.wrap { display: flex; align-items: center; gap: 4px; margin-top: 10px; color: #999; }
.foot { display: flex; justify-content: flex-end; gap: 10px; padding-top: 13px; }
.foot button { width: 70px; height: 25px; border: 1px solid #555; background: #fff; color: #333; }
```
